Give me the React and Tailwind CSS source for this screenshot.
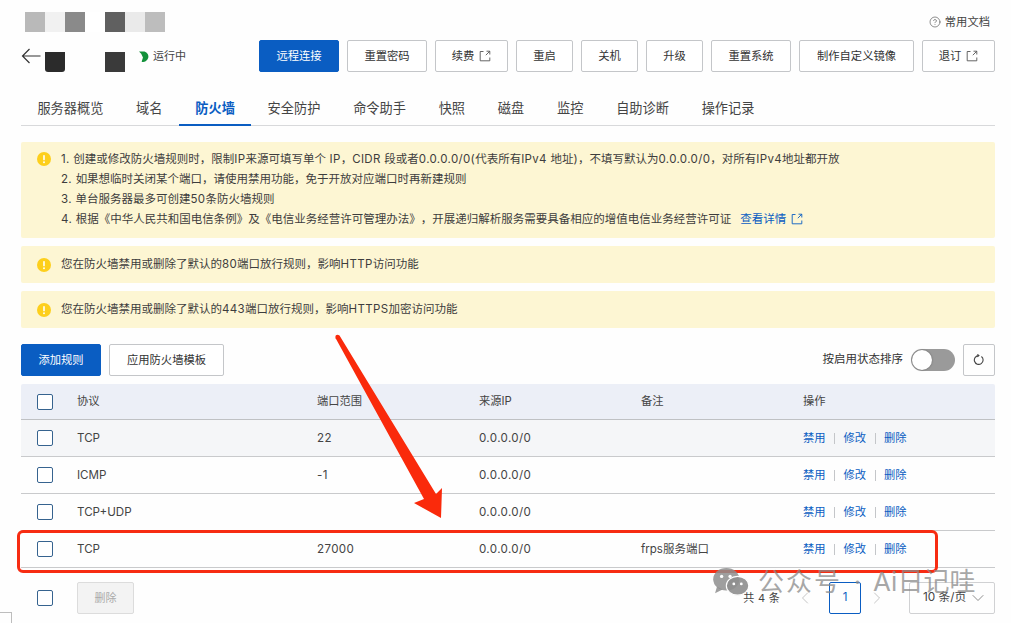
import React from "react";
import { CircleHelp, ChevronDown, ChevronLeft, ChevronRight } from "lucide-react";

const Ext = ({ className = "" }) => (
  <svg viewBox="0 0 12 12" fill="none" stroke="currentColor" strokeWidth="0.9" className={className}>
    <path d="M4.5 1.5H1.2v9.3h9.6V7.5M7.5 1.2h3.3v3.3M10.8 1.2 6.8 5.2" />
  </svg>
);

const Warn = () => (
  <svg viewBox="0 0 14 14" className="w-[14px] h-[14px] shrink-0">
    <circle cx="7" cy="7" r="7" fill="#fdcf1c" />
    <rect x="6.2" y="3" width="1.6" height="5.4" rx="0.8" fill="#fff" />
    <circle cx="7" cy="10.2" r="0.95" fill="#fff" />
  </svg>
);

const Mixed = ({ text }) =>
  text.split(/([\x00-\x7f]+)/).map((s, i) =>
    i % 2 ? (
      <span key={i} className="tracking-[0.35px]">{s}</span>
    ) : (
      <React.Fragment key={i}>{s}</React.Fragment>
    )
  );

const Btn = ({ children, w, primary }) => (
  <button
    className={
      "h-8 rounded-[2px] border flex items-center justify-center gap-[5px] text-[11.3px] shrink-0 " +
      (primary ? "bg-[#0a5dc2] border-[#0a5dc2] text-white " : "bg-white border-[#c4c6c9] text-[#333] ") +
      w
    }
  >
    {children}
  </button>
);

const Check = () => <span className="block w-4 h-4 rounded-[2px] border border-[#36638f] bg-white" />;

const Mosaic = ({ c }) => <span className={"block w-5 h-5 shrink-0 " + c} />;

const tabs = ["服务器概览", "域名", "防火墙", "安全防护", "命令助手", "快照", "磁盘", "监控", "自助诊断", "操作记录"];

const rows = [
  { p: "TCP", port: "22", note: "", bg: "bg-[#f5f6f8]" },
  { p: "ICMP", port: "-1", note: "", bg: "" },
  { p: "TCP+UDP", port: "", note: "", bg: "" },
  { p: "TCP", port: "27000", note: "frps服务端口", bg: "" },
];

const gridCols = "grid grid-cols-[56px_240px_162px_162px_162px_1fr] items-center";

export default function App() {
  return (
    <div className="relative w-[1011px] h-[623px] overflow-hidden bg-[#fefefe] text-[#333] [text-spacing-trim:space-all] font-['Inter','Noto_Sans_CJK_SC',sans-serif]">
      <div className="pt-3 pl-[21px] pr-4">
        <div className="h-5 flex items-center justify-between">
          <div className="flex pl-1">
            <Mosaic c="bg-[#b9b9b9]" />
            <Mosaic c="bg-[#f1f1f1]" />
            <Mosaic c="bg-[#8a8a8a]" />
            <Mosaic c="bg-white" />
            <Mosaic c="bg-[#606060]" />
            <Mosaic c="bg-[#eaeaea]" />
            <Mosaic c="bg-[#bdbdbd]" />
          </div>
          <div className="flex items-center gap-[4px] text-[11.3px] text-[#444] pr-[5px]">
            <CircleHelp className="w-3 h-3" strokeWidth={1.2} />
            <span>常用文档</span>
          </div>
        </div>

        <div className="mt-2 h-8 flex items-center justify-between">
          <div className="flex items-center h-8">
            <svg viewBox="0 0 20 16" fill="none" stroke="#333" strokeWidth="1.2" className="w-5 h-4 shrink-0 mt-[-1px]">
              <path d="M1.5 8H19.5M8.5 1 1.5 8l7 7" />
            </svg>
            <span className="block w-5 h-5 ml-1 mt-3 bg-[#2b2b2b] rounded-b-[3px]" />
            <span className="block w-10" />
            <span className="block w-5 h-5 mt-3 bg-[#3a3a3a]" />
            <svg viewBox="0 0 10 10" className="w-[11px] h-[11px] ml-[14px] mr-[3px]">
              <path d="M0 .4H5A4.8 4.8 0 1 1 2.4 9.7L3.6 5.8 2 2.4Z" fill="#12913a" />
            </svg>
            <span className="text-[11px] text-[#444]">运行中</span>
          </div>
          <div className="flex gap-2">
            <Btn w="w-20" primary>远程连接</Btn>
            <Btn w="w-20">重置密码</Btn>
            <Btn w="w-[73px]">续费<Ext className="w-3 h-3 text-[#555]" /></Btn>
            <Btn w="w-[57px]">重启</Btn>
            <Btn w="w-[57px]">关机</Btn>
            <Btn w="w-[57px]">升级</Btn>
            <Btn w="w-20">重置系统</Btn>
            <Btn w="w-[115px]">制作自定义镜像</Btn>
            <Btn w="w-[73px]">退订<Ext className="w-3 h-3 text-[#555]" /></Btn>
          </div>
        </div>

        <div className="mt-[19px] h-[35px] flex border-b border-[#d8d9db]">
          {tabs.map((t, i) => (
            <div
              key={t}
              className={
                "px-[16.4px] h-[35px] flex items-center text-[13.2px] " +
                (i === 2 ? "text-[#0a5dc2] font-semibold border-b-[2.5px] border-[#0a5dc2] pt-[2px]" : "text-[#444]")
              }
            >
              {t}
            </div>
          ))}
        </div>

        <div className="mt-4 flex flex-col gap-2">
          <div className="h-24 bg-[#fdf6d3] rounded-[2px] pl-4 pt-[7px] flex gap-[10px]">
            <span className="mt-[3px]"><Warn /></span>
            <div className="text-[11.5px] leading-5 text-[#3d3d3d]">
              <div><Mixed text="1. 创建或修改防火墙规则时，限制IP来源可填写单个 IP，CIDR 段或者0.0.0.0/0(代表所有IPv4 地址)，不填写默认为0.0.0.0/0，对所有IPv4地址都开放" /></div>
              <div><Mixed text="2. 如果想临时关闭某个端口，请使用禁用功能，免于开放对应端口时再新建规则" /></div>
              <div><Mixed text="3. 单台服务器最多可创建50条防火墙规则" /></div>
              <div className="flex items-center">
                <span><Mixed text="4. 根据《中华人民共和国电信条例》及《电信业务经营许可管理办法》，开展递归解析服务需要具备相应的增值电信业务经营许可证" /></span>
                <span className="ml-[9px] text-[#0a5dc2] flex items-center gap-[5px]">查看详情<Ext className="w-3 h-3" /></span>
              </div>
            </div>
          </div>
          <div className="h-[37px] bg-[#fdf6d3] rounded-[2px] pl-4 flex items-center gap-[10px] text-[11.5px] text-[#3d3d3d]">
            <Warn />
            <span><Mixed text="您在防火墙禁用或删除了默认的80端口放行规则，影响HTTP访问功能" /></span>
          </div>
          <div className="h-[37px] bg-[#fdf6d3] rounded-[2px] pl-4 flex items-center gap-[10px] text-[11.5px] text-[#3d3d3d]">
            <Warn />
            <span><Mixed text="您在防火墙禁用或删除了默认的443端口放行规则，影响HTTPS加密访问功能" /></span>
          </div>
        </div>

        <div className="mt-4 h-8 flex items-center justify-between">
          <div className="flex gap-2">
            <Btn w="w-20" primary>添加规则</Btn>
            <Btn w="w-[115px]">应用防火墙模板</Btn>
          </div>
          <div className="flex items-center">
            <span className="text-[11.5px] text-[#333]">按启用状态排序</span>
            <span className="relative ml-2 block w-11 h-[22px] rounded-full bg-[#9a9a9a]">
              <span className="absolute left-[1px] top-[1px] w-5 h-5 rounded-full bg-white shadow-[0_0_2px_rgba(0,0,0,0.4)]" />
            </span>
            <span className="ml-2 w-8 h-8 border border-[#c4c6c9] rounded-[2px] flex items-center justify-center">
              <svg viewBox="0 0 12 12" fill="none" stroke="#444" strokeWidth="1.1" className="w-3 h-3">
                <path d="M8.4 2.5A4.4 4.4 0 1 1 5.8 1.6M4.4.4 5.9 1.6 4.4 2.9" />
              </svg>
            </span>
          </div>
        </div>

        <div className="mt-2">
          <div className={gridCols + " h-9 bg-[#eceff7] border-b border-[#bfc1c4] text-[11.25px] text-[#444] rounded-t-[2px]"}>
            <span className="pl-4"><Check /></span>
            <span>协议</span>
            <span>端口范围</span>
            <span>来源IP</span>
            <span>备注</span>
            <span>操作</span>
          </div>
          {rows.map((r, i) => (
            <div key={i} className={gridCols + " h-[37px] border-b border-[#c9cacc] text-[11.6px] text-[#444] " + r.bg}>
              <span className="pl-4"><Check /></span>
              <span className="pt-[2px]">{r.p}</span>
              <span className="pt-[2px] tracking-[0.35px]">{r.port}</span>
              <span className="pt-[2px] tracking-[0.35px]">0.0.0.0/0</span>
              <span className="pt-[2px] text-[11.5px]">{r.note}</span>
              <span className="flex items-center text-[11.25px] text-[#0a5dc2]">
                <span>禁用</span>
                <span className="w-px h-[11px] bg-[#c4c6c9] mx-[8.5px]" />
                <span>修改</span>
                <span className="w-px h-[11px] bg-[#c4c6c9] mx-[8.5px]" />
                <span>删除</span>
              </span>
            </div>
          ))}
        </div>

        <div className="mt-[14px] h-8 flex items-center justify-between">
          <div className="flex items-center pl-4">
            <Check />
            <span className="ml-6 w-[57px] h-8 bg-[#f3f3f3] border border-[#dcdcdc] rounded-[2px] flex items-center justify-center text-[11px] text-[#aaa]">删除</span>
          </div>
          <div className="flex items-center">
            <span className="text-[11px] text-[#444] tracking-[0.3px]">共 4 条</span>
            <ChevronLeft className="w-5 h-5 ml-[15px] text-[#bbb]" strokeWidth={1} />
            <span className="ml-[14px] w-8 h-8 border border-[#0a5dc2] rounded-[2px] flex items-center justify-center text-[11.5px] text-[#0a5dc2]">1</span>
            <ChevronRight className="w-5 h-5 ml-[6px] text-[#bbb]" strokeWidth={1} />
            <span className="ml-[22px] w-[86px] h-8 border border-[#d0d1d3] rounded-[2px] flex items-center justify-between pl-[13px] pr-[6px] text-[11.8px] text-[#444] whitespace-nowrap">
              10 条/页
              <ChevronDown className="w-5 h-5 shrink-0 text-[#777]" strokeWidth={1} />
            </span>
          </div>
        </div>
      </div>

      <div className="absolute left-0 bottom-0 w-3 h-[11px] border-t border-r border-[#bdbdbd]" />

      <div className="absolute left-[17px] top-[530px] w-[921px] h-[43px] rounded-[6px] border-[3px] border-[#f72c12]" />

      <svg className="absolute left-0 top-0 pointer-events-none" width="1011" height="623">
        <polygon points="335.5,338 339.5,335.5 436,494 442,488 441,518 414,503 424,499" fill="#fa2a0b" strokeLinejoin="round" />
        <circle cx="337.5" cy="337" r="2.2" fill="#fa2a0b" />
      </svg>

      <div className="absolute left-[712px] top-[566px] flex items-center text-[#8a8a8a]/75 pointer-events-none text-[26px] leading-8 whitespace-nowrap">
        <svg viewBox="0 0 40 32" className="w-[38px] h-[30px] mr-[8px]">
          <ellipse cx="15" cy="13" rx="14" ry="12" fill="#8e8e8e" fillOpacity="0.85" />
          <path d="M5 21 3 28l8-4Z" fill="#8e8e8e" fillOpacity="0.85" />
          <ellipse cx="27" cy="20" rx="12" ry="10" fill="#8e8e8e" fillOpacity="0.9" stroke="#fff" strokeWidth="1.2" />
          <circle cx="10" cy="10" r="1.8" fill="#fff" />
          <circle cx="19" cy="10" r="1.8" fill="#fff" />
          <circle cx="23" cy="18" r="1.5" fill="#fff" />
          <circle cx="31" cy="18" r="1.5" fill="#fff" />
        </svg>
        <span className="tracking-[2px]">公众号</span>
        <span className="w-[31px] text-center">·</span>
        <span>Ai日记哇</span>
      </div>
    </div>
  );
}
